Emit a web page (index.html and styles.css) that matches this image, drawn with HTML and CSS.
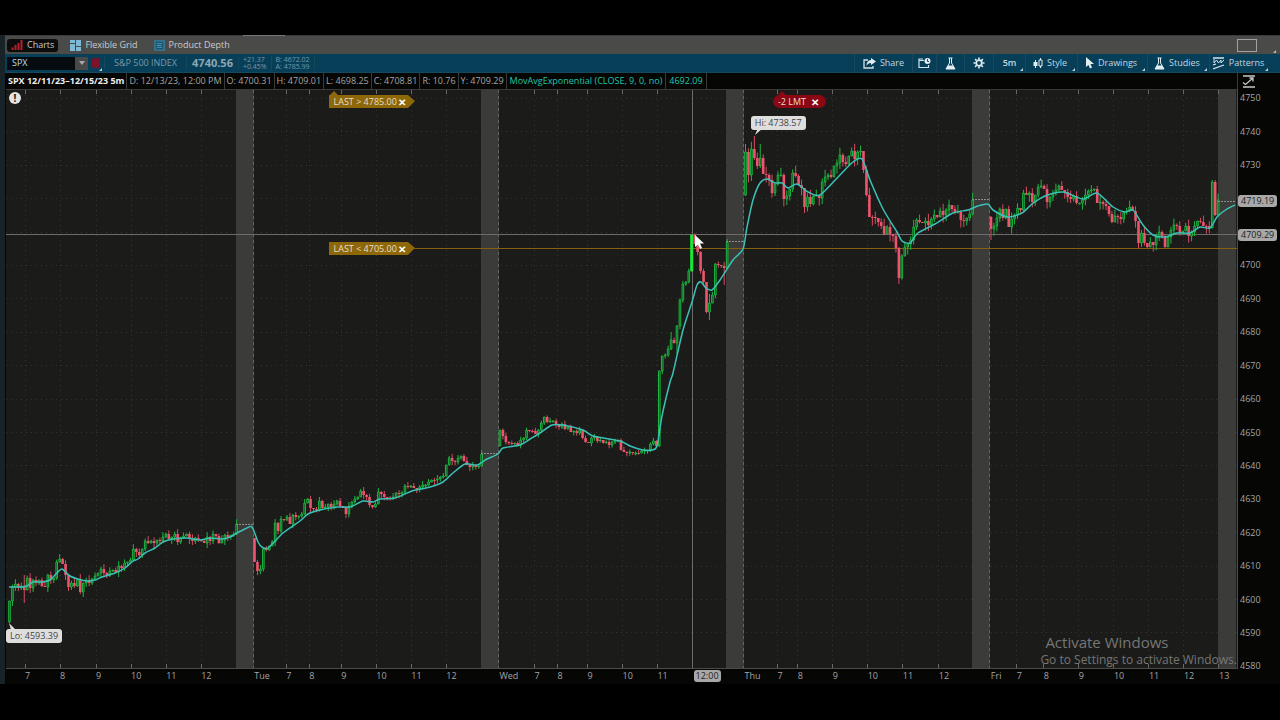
FILE: index.html
```html
<!DOCTYPE html>
<html lang="en">
<head>
<meta charset="utf-8">
<title>SPX Charts</title>
<link rel="stylesheet" href="styles.css">
</head>
<body>
<main class="app">
  <nav class="tabs">
    <button class="tab tab-active" type="button">
      <svg class="icon" width="12" height="12" viewBox="0 0 12 12"><path d="M1.500 11V8.500M4.500 11V6M7.500 11V4M10.500 11V1" stroke="#b3202c" stroke-width="2"/></svg>
      Charts
    </button>
    <button class="tab" type="button">
      <svg class="icon" width="11" height="12" viewBox="0 0 11 12" fill="#7fb9d8"><path d="M0 1h5v3H0zM0 5h5v7H0zM6 1h5v6H6zM6 8h5v4H6z"/></svg>
      Flexible Grid
    </button>
    <button class="tab" type="button">
      <svg class="icon" width="11" height="11" viewBox="0 0 12 12"><path d="M1 1h10v10H1z" fill="#1c526c" stroke="#34809f" stroke-width="1.500"/><path d="M3 4h6M3 6h5M3 8h6" stroke="#4c9dbd"/></svg>
      Product Depth
    </button>
    <button class="window-button" type="button" aria-label="Window layout"></button>
  </nav>

  <header class="toolbar">
    <div class="symbol">
      <input class="symbol-input" type="text" value="SPX" aria-label="Symbol">
      <button class="symbol-drop" type="button" aria-label="Symbol list"></button>
    </div>
    <button class="link-color corner" type="button" aria-label="Link color"><span class="link-chip"></span></button>
    <span class="company">S&amp;P 500 INDEX</span>
    <strong class="last-price">4740.56</strong>
    <span class="quote">+21.37<br>+0.45%</span>
    <span class="quote">B: 4672.02<br>A: 4785.99</span>
    <div class="tools">
      <button class="tool tool-share" type="button">
        <svg width="13" height="11" viewBox="0 0 13 11"><path d="M5 2H1v8h9V8" fill="none" stroke="#d3e1e8" stroke-width="1.300"/><path d="M8 0l5 3.500L8 7V5C5.500 5 4.500 6 3.500 8 3.500 4.500 5 2.200 8 2z" fill="#e2edf2"/></svg>
        Share
      </button>
      <button class="tool tool-cal" type="button" aria-label="Calendar">
        <svg width="13" height="12" viewBox="0 0 13 12"><path d="M6 3.500H1v7h9.500V8M1 3.500V2h4" fill="none" stroke="#d3e1e8" stroke-width="1.200"/><circle cx="9.500" cy="4" r="3" fill="#e2edf2"/><path d="M9.500 2V4.500H11" fill="none" stroke="#174b61"/></svg>
      </button>
      <button class="tool tool-flask" type="button" aria-label="Analyze">
        <svg width="11" height="13" viewBox="0 0 11 13"><path d="M3.500 1h4M4.500 1v5L1 12h9L6.500 6V1" fill="none" stroke="#e2edf2"/><path d="M3 8.500h5l2 3.500H1z" fill="#e2edf2"/></svg>
      </button>
      <button class="tool tool-gear" type="button" aria-label="Settings">
        <svg width="12" height="12" viewBox="0 0 12 12" fill="none" stroke="#e2edf2"><circle cx="6" cy="6" r="2.800" stroke-width="1.800"/><path d="M6 .5v2M6 9.500v2M.5 6h2M9.500 6h2M2.100 2.100l1.400 1.400M8.500 8.500l1.400 1.400M2.100 9.900l1.400-1.400M8.500 3.500l1.400-1.400" stroke-width="1.600"/></svg>
      </button>
      <button class="tool tool-period corner" type="button">5m</button>
      <button class="tool tool-style corner" type="button">
        <svg width="10" height="11" viewBox="0 0 10 11"><path d="M2.500 2v8M7.500 0v2M7.500 8v2" stroke="#e2edf2"/><path d="M.5 4h4v4h-4z" fill="#e2edf2"/><path d="M6 2h3v6H6z" fill="none" stroke="#e2edf2"/></svg>
        Style
      </button>
      <button class="tool tool-draw corner" type="button">
        <svg width="9" height="12" viewBox="0 0 9 12"><path d="M1 0v10l2.500-2L5 11.500l2-.9L5.500 7H9z" fill="#e2edf2"/></svg>
        Drawings
      </button>
      <button class="tool tool-studies corner" type="button">
        <svg width="11" height="13" viewBox="0 0 11 13"><path d="M3.500 1h4M4.500 1v5L1 12h9L6.500 6V1" fill="none" stroke="#e2edf2"/><path d="M3 8.500h5l2 3.500H1z" fill="#e2edf2"/></svg>
        Studies
      </button>
      <button class="tool tool-patterns corner" type="button">
        <svg width="12" height="13" viewBox="0 0 12 13" fill="none" stroke="#d3e1e8"><path d="M0 1h11M0 12l11-4M0 8l3-1" stroke-width="1.300"/><path d="M1 2v4l2.500-3 2 3L8 3v3l3-3"/></svg>
        Patterns
      </button>
    </div>
  </header>

  <section class="chart">
    <div class="readout">
      <b class="cell cell-title">SPX 12/11/23–12/15/23 5m</b>
      <span class="cell">D: 12/13/23, 12:00 PM</span>
      <span class="cell">O: 4700.31</span>
      <span class="cell">H: 4709.01</span>
      <span class="cell">L: 4698.25</span>
      <span class="cell">C: 4708.81</span>
      <span class="cell">R: 10.76</span>
      <span class="cell">Y: 4709.29</span>
      <span class="cell cell-study">MovAvgExponential (CLOSE, 9, 0, no)</span>
      <span class="cell cell-study">4692.09</span>
    </div>
    <button class="scale-button" type="button" aria-label="Fit scale">
      <svg width="14" height="13" viewBox="0 0 14 13" fill="none" stroke="#c8c8c8"><path d="M1 1h12M1 12h12" stroke-width="1.500"/><path d="M1 7.500l2.500 2L11 3M7.500 3H11v3.500" stroke-width="1.300"/></svg>
    </button>

    <div class="plot" id="plot">
      <svg class="drawing" id="drawing" viewBox="6 90 1231 578" preserveAspectRatio="none" role="img" aria-label="SPX five minute candles with moving average"></svg>
      <span class="alert-mark">!</span>
      <div class="order tag-gold tag-upper">LAST &gt; 4785.00 <button class="close" type="button" aria-label="Remove alert">✕</button></div>
      <div class="order tag-gold tag-lower">LAST &lt; 4705.00 <button class="close" type="button" aria-label="Remove alert">✕</button></div>
      <div class="order tag-red">-2 LMT <button class="close" type="button" aria-label="Cancel order">✕</button></div>
      <div class="bubble bubble-hi">Hi: 4738.57</div>
      <div class="bubble bubble-lo">Lo: 4593.39</div>
      <svg class="pointer" width="10" height="15" viewBox="0 0 10 15"><path d="M1 0v12l3-2.500L6 14l2-1-2-4.500h4z" fill="#fff"/></svg>
      <aside class="watermark">
        <p class="watermark-title">Activate Windows</p>
        <p class="watermark-text">Go to Settings to activate Windows.</p>
      </aside>
    </div>
    <div class="prices" id="prices"></div>
    <div class="times" id="times"></div>
  </section>
</main>
<script src="chart.js"></script>
</body>
</html>
```
FILE: styles.css
```css
* { box-sizing: border-box; }

body {
  margin: 0;
  height: 100vh;
  padding: 35px 0 36px;
  display: flex;
  background: #000;
  color: #a4a4a4;
  font-family: "Open Sans", "Noto Sans", sans-serif;
  font-size: 9px;
  line-height: 12px;
}

button, input { font: inherit; color: inherit; border: 0; padding: 0; margin: 0; background: none; }
p { margin: 0; }

.app {
  flex: 1;
  min-width: 0;
  display: flex;
  flex-direction: column;
  border-left: 5px solid #172326;
  background: #060605;
}

.tabs {
  position: relative;
  height: 19px;
  display: flex;
  align-items: center;
  gap: 8px;
  padding: 0 23px 0 2px;
  background: #4a4a49;
  border-top: 1px solid #3a3a3a;
}
.tabs::before {
  content: "";
  position: absolute;
  top: -1px;
  left: 238px;
  width: 42px;
  height: 1px;
  background: #777;
}
.tabs::after {
  content: "";
  position: absolute;
  right: 4px;
  bottom: 1px;
  border-left: 3px solid transparent;
  border-bottom: 3px solid #bbb;
}
.tab {
  height: 13px;
  display: flex;
  align-items: center;
  gap: 4px;
  padding: 0 4px;
  border-radius: 3px;
  color: #cacaca;
}
.tab-active { background: #0c0c0c; }
.icon { flex: none; }
.window-button { margin-left: auto; width: 20px; height: 13px; border: 1px solid #a2a2a2; }

.toolbar {
  height: 19px;
  display: flex;
  align-items: center;
  background: #073f59;
  border-bottom: 1px solid #17485d;
}
.symbol { display: flex; margin-left: 2px; height: 13px; width: 81px; background: #050b0e; }
.symbol-input { flex: 1; min-width: 0; padding-left: 5px; color: #c0dce8; outline: 0; }
.symbol-drop { width: 13px; background: #494949; display: grid; place-items: center; }
.symbol-drop::before { content: ""; border: 3px solid transparent; border-top: 4px solid #aaa; border-bottom: 0; }
.corner { position: relative; }
.corner::after {
  content: "";
  position: absolute;
  right: 2px;
  bottom: 1px;
  border-left: 3px solid transparent;
  border-bottom: 3px solid #b9d0da;
}
.link-color { width: 16px; height: 17px; display: grid; place-items: center; }
.link-chip { width: 8px; height: 10px; border-radius: 2px; background: #7e1228; }
.company { padding: 0 9px; border: solid #19475c; border-width: 0 1px; color: #7c97a3; }
.last-price { padding: 0 5px; font-size: 11px; color: #8fa7b1; border-right: 1px solid #19475c; }
.quote { padding: 0 4px; border-right: 1px solid #19475c; font-size: 7px; line-height: 7px; color: #7797a5; }

.tools { display: flex; height: 100%; margin-left: auto; padding-right: 10px; color: #c3d7e0; }
.tool {
  display: flex;
  align-items: center;
  justify-content: center;
  gap: 4px;
  height: 100%;
  border-left: 1px solid #18495f;
}
.tool-share { width: 58px; }
.tool-cal { width: 24px; }
.tool-flask { width: 28px; }
.tool-gear { width: 29px; }
.tool-period { width: 32px; font-weight: 600; }
.tool-style { width: 52px; padding-right: 3px; }
.tool-draw { width: 70px; padding-right: 3px; }
.tool-studies { width: 62px; padding-right: 3px; }
.tool-patterns { width: 61px; padding-right: 3px; }

.chart {
  flex: 1;
  min-height: 0;
  display: grid;
  grid-template-columns: minmax(0, 1fr) 42px;
  grid-template-rows: 17px minmax(0, 1fr) 16px;
  padding-left: 1px;
}
.readout { display: flex; align-items: stretch; border: solid #3a3a3a; border-width: 0 1px 1px 0; }
.cell { padding: 2px; border-right: 1px solid #3a3a3a; white-space: nowrap; }
.cell-title { color: #eee; }
.cell-study { color: #20c5ac; padding: 2px 3px; }
.scale-button { padding-left: 4px; display: flex; align-items: center; }

.plot {
  position: relative;
  background: #1b1b1a;
  border-right: 1px solid #4b4b4a;
}
.drawing { position: absolute; inset: 0; width: 100%; height: 100%; }
.drawing path, .drawing rect { vector-effect: non-scaling-stroke; }
.band { fill: #3b3b3a; }
.grid { fill: none; stroke: #333332; stroke-dasharray: 1 4; }
.tick { stroke: #696968; }
.session { stroke: #666; stroke-dasharray: 3 3; }
.up { fill: #0b461b; stroke: #1eb541; }
.down { fill: #ee546d; stroke: none; }
.hot { fill: #18eb35; stroke: #18eb35; }
.wick-up { stroke: #1eb541; }
.wick-down { stroke: #d84b61; }
.flat { stroke: #8c8c8c; stroke-dasharray: 2 1; }
.average { fill: none; stroke: #3bc2b6; stroke-width: 1.5px; stroke-linejoin: round; }
.alert-line { stroke: #84600f; }
.cross { stroke: #6c6c6c; }
.leader { fill: #ddd; }

.alert-mark {
  position: absolute;
  left: 3px;
  top: 2px;
  width: 12px;
  height: 12px;
  border-radius: 6px;
  background: #e4e4e4;
  color: #111;
  font-size: 10px;
  font-weight: 700;
  text-align: center;
}
.order {
  position: absolute;
  display: flex;
  align-items: center;
  height: 13px;
  color: #e6dfcb;
  white-space: nowrap;
}
.order::before {
  content: "";
  position: absolute;
  bottom: 100%;
  left: 1px;
  border: 4px solid transparent;
  border-bottom-color: #8d6708;
  border-top: 0;
}
.close { color: #fff; font-size: 10px; font-weight: 700; margin-left: 1px; }
.tag-gold {
  left: 26.2%;
  width: 79px;
  padding-left: 5px;
  background: #8d6708;
}
.tag-gold::after {
  content: "";
  position: absolute;
  left: 100%;
  top: 0;
  border: solid transparent;
  border-width: 6px 0 7px 7px;
  border-left-color: #8d6708;
}
.tag-upper { top: 5px; }
.tag-lower { top: 26.3%; }
.tag-lower::before { display: none; }
.tag-red { left: 62.3%; top: 5px; width: 53px; padding-left: 5px; border-radius: 7px; background: #8b0714; }
.tag-red::before { left: 5px; border-bottom-color: #8b0714; }
.tag-red .close { margin-left: 5px; }
.bubble {
  position: absolute;
  height: 14px;
  padding: 1px 4px;
  border-radius: 3px;
  background: #dedede;
  color: #444;
  white-space: nowrap;
}
.bubble-hi { left: 60.5%; top: 4.5%; }
.bubble-lo { left: 0; bottom: 25px; }
.pointer { position: absolute; left: 55.9%; top: 25%; }
.watermark {
  position: absolute;
  right: 0;
  bottom: 0;
  color: #767675;
  font-size: 12px;
  line-height: 16px;
  white-space: nowrap;
}
.watermark-title { padding-left: 5px; font-size: 15px; line-height: 20px; }

.prices { position: relative; }
.price { position: absolute; left: 2px; transform: translateY(-50%); }
.price-mark { left: 0; padding: 0 3px; border-radius: 3px; background: #a8a8a8; color: #222; }
.times { position: relative; border-top: 1px solid #4b4b4a; }
.time { position: absolute; top: 1px; white-space: nowrap; }
.time-mark { padding: 0 2px; border-radius: 3px; background: #a8a8a8; color: #222; }
```
FILE: chart.js
```js
const LEFT = 6, TOP = 90, WIDTH = 1231, HEIGHT = 578;
const BOTTOM = TOP + HEIGHT, RIGHT = LEFT + WIDTH, STEP = 2.95;

// Each session: start x, opening level, closing levels of its bars, usual wick reach.
const sessions = [
  { x: 9.5, open: 622, spread: 6, closes: [601,587,584,588,586,590,578,588,580,583,580,586,587,575,580,578,562,559,564,575,587,583,586,580,592,583,580,583,579,576,573,569,573,575,571,570,572,566,568,563,562,560,549,552,555,549,541,543,541,543,540,541,537,534,539,537,534,542,538,536,534,539,541,538,540,541,543,537,541,534,536,543,540,535,537,535,534,524] },
  { x: 254.5, open: 538, spread: 5, closes: [562,571,569,549,550,546,542,523,531,519,520,517,524,515,517,516,514,503,499,508,509,510,501,508,507,504,507,504,501,506,508,514,506,502,499,497,491,495,497,505,507,504,492,494,497,498,499,497,493,494,492,486,487,486,488,489,487,485,485,482,480,480,479,477,476,465,458,461,462,458,456,461,465,467,465,467,466,454] },
  { x: 500, open: 446, spread: 4, closes: [430,436,442,443,444,443,445,440,438,430,431,431,434,430,423,417,422,421,421,425,427,424,429,427,432,431,433,430,438,442,443,438,437,441,440,443,442,445,442,441,440,450,452,453,452,453,453,453,451,450,450,444,441,446,371,356,355,349,340,343,326,300,284,282,271,235,244,252,271,282,312,303,295,264,265,266,268,242] },
  { x: 745.5, open: 195, spread: 9, closes: [152,175,149,158,166,158,174,175,180,193,184,175,175,199,196,189,173,176,185,188,207,197,204,196,195,198,182,177,175,177,166,163,155,162,164,156,151,159,152,151,170,195,217,217,218,222,226,234,227,234,236,248,278,256,247,244,240,227,220,222,223,221,225,219,215,217,211,215,210,205,209,213,212,220,221,218,214,200] },
  { x: 991, open: 217, spread: 8, closes: [229,226,218,209,218,209,227,219,215,208,210,193,195,193,202,195,187,186,189,202,197,193,190,186,190,192,197,199,196,203,203,200,195,191,190,189,203,202,204,206,214,222,216,217,219,212,211,207,211,221,243,233,243,247,242,245,237,232,236,247,237,230,225,226,233,231,226,236,232,226,221,222,226,226,228,182,215,200] }
];
// Wicks that reach further than usual, keyed "session:bar" as [high, low].
const wicks = {
  "0:0": [601, 623], "0:5": [575, 603], "0:24": [574, 594], "3:0": [144, 196], "3:3": [136, 160],
  "3:5": [144, 168], "3:52": [247, 284], "2:76": [262, 285], "2:71": [294, 320],
  "2:58": [332, 350], "2:60": [325, 354], "4:0": [216, 240], "4:75": [180, 228], "4:76": [180, 216],
  "4:53": [243, 248], "4:59": [234, 248], "2:65": [235, 271], "2:54": [371, 447]
};
const bands = [[236, 254, 524.5], [481, 499, 453.5], [726, 744, 241.5], [972, 990, 199.5], [1218, 1236, 201.5]];
const hours = [
  [25, "7"], [60, "8"], [96, "9"], [131, "10"], [166, "11"], [201, "12"], [254, "Tue"],
  [286, "7"], [309, "8"], [341, "9"], [376, "10"], [411, "11"], [446, "12"], [499, "Wed"],
  [534, "7"], [557, "8"], [587, "9"], [622, "10"], [657, "11"], [744, "Thu"],
  [777, "7"], [797, "8"], [832, "9"], [867, "10"], [902, "11"], [938, "12"], [990, "Fri"],
  [1016, "7"], [1043, "8"], [1078, "9"], [1113, "10"], [1148, "11"], [1183, "12"], [1218, "13"]
];
const average = "9,587 20,587 27,586 33,582 42,582 50,580 57,573 62,569 70,576 78,579 87,581 95,580 102,577 115,573 125,568 133,561 138,559 145,553 155,548 163,542 173,539 187,538 200,540 210,538 222,539 230,537 237,533 245,529 252,527 258,542 262,547 268,548 283,533 300,521 308,514 320,510 337,507 350,507 363,501 373,502 380,499 395,498 412,491 430,487 443,482 453,473 465,464 477,465 487,459 498,454 503,448 520,445 530,439 540,433 552,425 563,425 583,430 593,436 620,441 630,446 643,450 652,450 657,446 662,416 670,382 673,373 683,330 692,302 697,285 701,282 706,288 712,290 720,280 733,260 743,249 747,227 753,200 760,183 767,179 775,183 782,183 788,188 797,184 808,192 820,195 840,175 853,162 862,159 870,180 883,209 897,232 902,241 910,243 918,233 935,224 953,213 968,210 978,206 988,204 993,210 1008,217 1022,213 1032,204 1045,196 1063,192 1083,199 1097,193 1113,207 1125,212 1133,210 1143,225 1153,235 1165,237 1177,233 1190,233 1200,227 1210,228 1217,217 1227,209 1235,205";

const levelOf = price => 98.5 + (4750 - price) * 3.34;
const path = (name, d) => `<path class="${name}" d="${d}"/>`;

// Joins the measured points with a curve whose tangents follow their neighbours.
function smooth(list) {
  const p = list.split(" ").map(pair => pair.split(",").map(Number));
  let d = "M" + p[0];
  for (let i = 0; i < p.length - 1; i++) {
    const a = p[Math.max(i - 1, 0)], b = p[i], c = p[i + 1], e = p[Math.min(i + 2, p.length - 1)];
    d += `C${b[0] + (c[0] - a[0]) / 8} ${b[1] + (c[1] - a[1]) / 8} ${c[0] - (e[0] - b[0]) / 8} ${c[1] - (e[1] - b[1]) / 8} ${c[0]} ${c[1]}`;
  }
  return d;
}

let art = "";
for (const [from, to] of bands) art += `<rect class="band" x="${from}" y="${TOP}" width="${to - from}" height="${HEIGHT}"/>`;
for (let p = 4750; p > 4580; p -= 10) art += path("grid", `M${LEFT} ${Math.floor(levelOf(p)) + 0.5}H${RIGHT}`);
for (const [x, label] of hours) {
  if (/[a-z]/.test(label)) {
    art += path("session", `M${x - 0.5} ${TOP}V${BOTTOM}`);
  } else {
    art += path("grid", `M${x + 0.5} ${TOP}V${BOTTOM}`);
    art += path("tick", `M${x + 0.5} ${TOP}v4M${x + 0.5} ${BOTTOM}v-4`);
  }
}
art += path("alert-line", `M413 248.5H${RIGHT}`);
art += path("cross", `M${LEFT} 234.5H${RIGHT}M692.5 ${TOP}V${BOTTOM}`);

sessions.forEach((s, day) => {
  let open = s.open;
  s.closes.forEach((close, i) => {
    const x = s.x + i * STEP;
    const rising = close < open || (close === open && i % 2 === 0);
    const top = Math.min(open, close), size = Math.max(Math.abs(open - close), 1);
    const reach = wicks[day + ":" + i] ||
      [top - (i * 7 % 5) * s.spread / 5, top + size + (i * 11 % 6) * s.spread / 6];
    art += path(rising ? "wick-up" : "wick-down", `M${x} ${reach[0]}V${top}M${x} ${top + size}V${reach[1]}`);
    const name = day === 2 && i === 65 ? "hot" : rising ? "up" : "down";
    const w = name === "down" ? 2.6 : name === "hot" ? 2 : 1.6;
    art += `<rect class="${name}" x="${x - w / 2}" y="${top}" width="${w}" height="${size}"/>`;
    open = close;
  });
});
for (const [from, to, level] of bands) art += path("flat", `M${from} ${level}H${to}`);
art += path("average", smooth(average));
art += path("leader", "M755 135l3-7h5zM9 623l2 7h5z");
document.getElementById("drawing").innerHTML = art;

const percent = (value, start, span) => ((value - start) / span * 100).toFixed(2) + "%";
let labels = "";
for (let p = 4750; p >= 4580; p -= 10) {
  if (p !== 4720 && p !== 4710) labels += `<span class="price" style="top:${percent(levelOf(p), TOP, HEIGHT)}">${p}</span>`;
}
for (const p of [4719.19, 4709.29]) {
  labels += `<span class="price price-mark" style="top:${percent(levelOf(p), TOP, HEIGHT)}">${p}</span>`;
}
document.getElementById("prices").innerHTML = labels;

document.getElementById("times").innerHTML =
  hours.map(([x, label]) => `<span class="time" style="left:${percent(x, LEFT, WIDTH)}">${label}</span>`).join("") +
  `<span class="time time-mark" style="left:${percent(693, LEFT, WIDTH)}">12:00</span>`;
```
